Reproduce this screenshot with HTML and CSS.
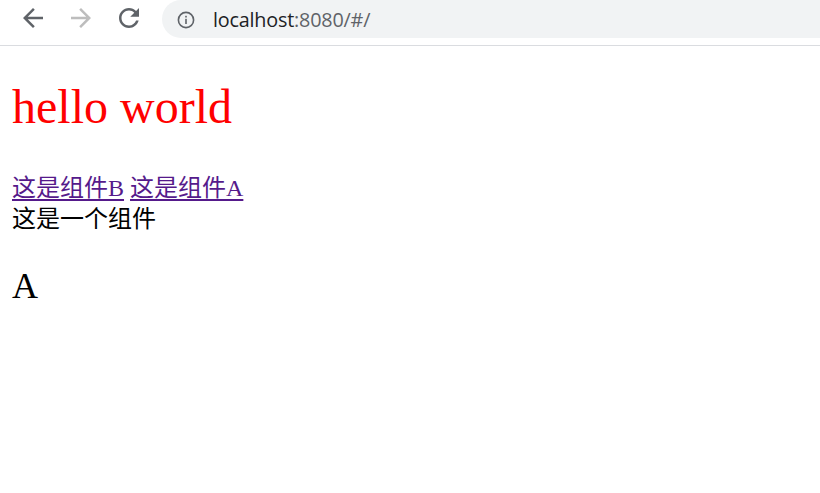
FILE: index.html
```html
<!DOCTYPE html>
<html lang="zh">
<head>
<meta charset="utf-8">
<title>localhost</title>
<link rel="stylesheet" href="styles.css">
</head>
<body>
<div class="chrome">
  <div class="nav">
    <svg class="icon" viewBox="0 0 24 24" width="30" height="30"><path fill="#5f6368" d="M20 11H7.83l5.59-5.59L12 4l-8 8 8 8 1.41-1.41L7.83 13H20v-2z"/></svg>
    <svg class="icon" viewBox="0 0 24 24" width="30" height="30"><path fill="#bdbdbd" d="M4 11h12.17l-5.59-5.59L12 4l8 8-8 8-1.41-1.41L16.17 13H4v-2z"/></svg>
    <svg class="icon" viewBox="0 0 24 24" width="30" height="30"><path fill="#5f6368" d="M17.65 6.35C16.2 4.9 14.21 4 12 4c-4.42 0-7.990 3.580-7.990 8s3.570 8 7.990 8c3.730 0 6.840-2.550 7.730-6h-2.080c-.820 2.330-3.040 4-5.650 4-3.310 0-6-2.690-6-6s2.690-6 6-6c1.660 0 3.140.690 4.220 1.780L13 11h7V4l-2.350 2.350z"/></svg>
  </div>
  <div class="omnibox">
    <svg class="info" viewBox="0 0 18 18" width="18" height="18"><circle cx="9" cy="9" r="7.6" fill="none" stroke="#5f6368" stroke-width="1.6"/><rect x="8.2" y="7.8" width="1.6" height="5.2" fill="#5f6368"/><rect x="8.2" y="4.8" width="1.6" height="1.7" fill="#5f6368"/></svg>
    <span class="url"><span class="host">localhost</span><span class="rest">:8080/#/</span></span>
  </div>
</div>
<div class="page">
  <h1 class="title">hello world</h1>
  <div class="links"><a class="link" href="#/b">这是组件B</a> <a class="link" href="#/a">这是组件A</a></div>
  <div class="comp">这是一个组件</div>
  <h2 class="sub">A</h2>
</div>
</body>
</html>
```
FILE: styles.css
```css
html, body {
  margin: 0;
  padding: 0;
  background: #fff;
}
body {
  font-family: "Liberation Serif", "Noto Sans CJK SC", serif;
  font-size: 24px;
  color: #000;
}
.chrome {
  height: 45px;
  border-bottom: 1px solid #dadce0;
  display: flex;
  align-items: flex-start;
  overflow: hidden;
}
.nav {
  display: flex;
  gap: 18px;
  padding-left: 18px;
  padding-top: 3px;
  width: 144px;
  flex: none;
}
.icon {
  display: block;
  flex: none;
}
.omnibox {
  flex: 1;
  height: 38px;
  background: #f1f3f4;
  border-radius: 19px 0 0 19px;
  display: flex;
  align-items: center;
  padding-left: 15px;
}
.info {
  display: block;
  flex: none;
  margin-top: 1px;
}
.url {
  margin-left: 18px;
  font-family: "Open Sans", sans-serif;
  font-size: 19.8px;
  letter-spacing: -0.2px;
}
.host { color: #202124; }
.rest { color: #5f6368; }
.page {
  margin: 12px;
}
.title {
  font-size: 48px;
  font-weight: normal;
  color: #ff0000;
  margin: 32px 0 37px;
  line-height: 58px;
}
.links, .comp {
  line-height: 31px;
}
.link {
  color: #551a8b;
  text-decoration-thickness: 2px;
  text-underline-offset: 3px;
}
.sub {
  font-size: 36px;
  font-weight: normal;
  margin: 30px 0;
}
```
